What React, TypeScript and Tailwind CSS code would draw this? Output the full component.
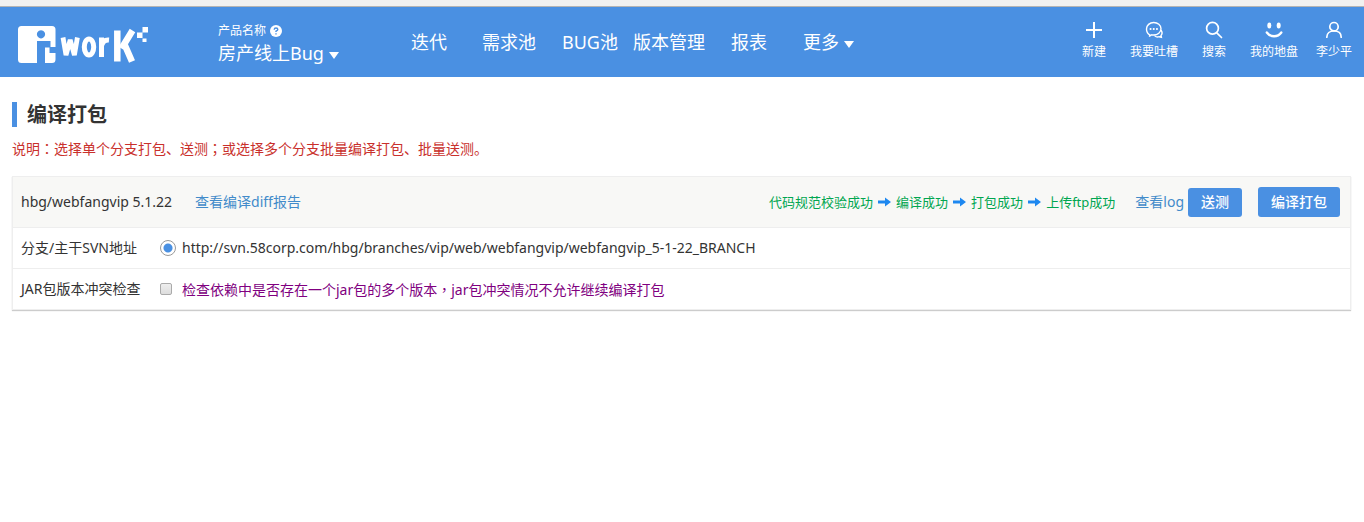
import React from "react";

const nav = [
  { label: "迭代", cls: "w-[36px]" },
  { label: "需求池", cls: "ml-[35px] w-[54px]" },
  { label: "BUG池", cls: "ml-[26px] w-[57px]" },
  { label: "版本管理", cls: "ml-[14px] w-[72px]" },
  { label: "报表", cls: "ml-[26px] w-[36px]" },
];

const stroke = { fill: "none", stroke: "currentColor", strokeWidth: 1.5, strokeLinecap: "round" as const };

const tools = [
  {
    label: "新建",
    cls: "",
    icon: <path d="M9 1v16M1 9h16" fill="none" stroke="currentColor" strokeWidth="2" />,
  },
  {
    label: "我要吐槽",
    cls: "ml-6",
    icon: (
      <g {...stroke} strokeWidth={1.4}>
        <path d="M5 14.200C2.800 13 1.500 11 1.500 8C1.500 4.300 4.700 1.500 8.700 1.500S16 4.300 16 7.800S12.700 14 8.700 14C7.800 14 7.200 14 6.500 13.800L4.300 15.500z" />
        <path d="M16.200 9.500c1.200 1.800 1 3.700-.2 5l.4 1.800-2.200-.6c-1.800.7-3.300.3-4.300-.8" />
        <path d="M5.500 8h.1M8.700 8h.1M11.900 8h.1" strokeWidth="2" />
      </g>
    ),
  },
  {
    label: "搜索",
    cls: "ml-6",
    icon: (
      <g {...stroke} strokeWidth={1.7}>
        <circle cx="7.500" cy="7.300" r="5.900" />
        <path d="M11.800 11.800l4.700 4.700" />
      </g>
    ),
  },
  {
    label: "我的地盘",
    cls: "ml-6",
    icon: (
      <g>
        <ellipse cx="4.300" cy="4.500" rx="2" ry="2.900" fill="currentColor" />
        <ellipse cx="13.700" cy="4.500" rx="2" ry="2.900" fill="currentColor" />
        <path d="M1.800 11.500c3.500 5 11 5 14.500 0" fill="none" stroke="currentColor" strokeWidth="2.400" strokeLinecap="round" />
      </g>
    ),
  },
  {
    label: "李少平",
    cls: "ml-[18px]",
    icon: (
      <g {...stroke} strokeWidth={1.7}>
        <circle cx="9" cy="5.700" r="4.200" />
        <path d="M1.800 16.200c0-4 3-6.200 7.200-6.200s7.200 2.200 7.200 6.200" />
      </g>
    ),
  },
];

function Logo() {
  return (
    <svg width="132" height="38" viewBox="0 0 132 38" role="img" aria-label="iwork">
      <path
        fillRule="evenodd"
        fill="#fff"
        d="M3.500 0H34Q37.500 0 37.500 3.500V21H32.500V15H19V37H3.500Q0 37 0 33.500V3.500Q0 0 3.500 0zM23 4.200a4.100 4.100 0 1 0 .01 0z"
      />
      <path d="M27 21.500h4.500V27h6v6.500q0 3.500-3.500 3.500h-7z" fill="#fff" />
      <g fill="none" stroke="#fff">
        <path d="M45 11.500l3 17.500 4.200-15 4.200 15 3-17.500" strokeWidth="4.800" strokeLinejoin="bevel" />
        <ellipse cx="71" cy="21" rx="4.700" ry="8" strokeWidth="5" />
        <path d="M83.500 31V11.500M84 19q1-5.500 7-5" strokeWidth="5" />
        <path d="M99.300 4.500v31" strokeWidth="6.500" />
        <path d="M114.500 4.500l-11 18M105.500 16l8.500 19.500" strokeWidth="6.500" />
      </g>
      <path d="M124.500 1h5.500v5.500h-5.500zM119 6.500h5.500V12H119zM124.500 12.500h4v3.500h-4z" fill="#fff" />
    </svg>
  );
}

function Caret() {
  return (
    <svg width="10" height="7" viewBox="0 0 10 7" className="mt-1" aria-hidden="true">
      <path d="M0 0h10L5 7z" fill="currentColor" />
    </svg>
  );
}

function Arrow() {
  return (
    <svg width="13" height="10" viewBox="0 0 13 10" className="mx-[5px]" aria-hidden="true">
      <path d="M0 3.500h7V.5L13 5 7 9.500v-3H0z" fill="#1e88f0" />
    </svg>
  );
}

const steps = ["代码规范校验成功", "编译成功", "打包成功", "上传ftp成功"];

export default function App() {
  return (
    <div className="min-h-screen bg-white font-['Noto_Sans','Noto_Sans_CJK_SC',sans-serif] text-sm text-[#333]">
      <div className="h-[7px] border-b border-[#b4b4b4] bg-[#f1f1f1]" />
      <header className="flex h-[70px] items-center bg-[#4a90e2] whitespace-nowrap text-white">
        <a href="#home" className="ml-[18px] w-[200px] pt-1.5">
          <Logo />
        </a>
        <div className="w-[193px] pt-1.5">
          <div className="flex h-4 items-center gap-1 text-xs">
            产品名称
            <svg width="12" height="12" viewBox="0 0 12 12" aria-hidden="true">
              <circle cx="6" cy="6" r="6" fill="#fff" />
              <path d="M4.200 4.700q0-1.700 1.800-1.700t1.800 1.500Q7.800 5.400 6 6.200V7M6 8.200v1.300" fill="none" stroke="#4a90e2" strokeWidth="1.400" />
            </svg>
          </div>
          <button className="flex h-7 items-center gap-[5px] text-lg">
            房产线上Bug <Caret />
          </button>
        </div>
        <nav className="flex items-center text-lg">
          {nav.map((n) => (
            <a key={n.label} href="#nav" className={n.cls}>
              {n.label}
            </a>
          ))}
          <button className="ml-9 flex items-center gap-[5px]">
            更多 <Caret />
          </button>
        </nav>
        <div className="mr-3 mb-1 ml-auto flex text-xs">
          {tools.map((t) => (
            <a key={t.label} href="#tool" className={"flex flex-col items-center gap-[5px] " + t.cls}>
              <svg width="18" height="18" viewBox="0 0 18 18" aria-hidden="true">
                {t.icon}
              </svg>
              <span className="leading-4">{t.label}</span>
            </a>
          ))}
        </div>
      </header>

      <main className="px-3 pt-[25px]">
        <h1 className="border-l-[5px] border-[#4a90e2] pl-[10px] text-xl leading-[25px] font-bold">编译打包</h1>
        <p className="mt-[11px] leading-5 text-[#c9302c]">
          说明<span className="font-['Noto_Sans_CJK_JP',sans-serif]">：</span>选择单个分支打包、送测
          <span className="font-['Noto_Sans_CJK_JP',sans-serif]">；</span>或选择多个分支批量编译打包、批量送测。
        </p>

        <section className="mt-[17px] mr-px border border-[#eee] shadow-[0_1px_1px_rgba(0,0,0,0.2)]">
          <div className="flex h-[50px] items-center bg-[#f8f8f6] pr-[10px] pl-2">
            <span>hbg/webfangvip 5.1.22</span>
            <a href="#diff" className="ml-[23px] text-[#428bca]">
              查看编译diff报告
            </a>
            <div className="ml-auto flex items-center text-[13px] text-[#00a650]">
              {steps.map((s, i) => (
                <React.Fragment key={s}>
                  {i > 0 && <Arrow />}
                  <span>{s}</span>
                </React.Fragment>
              ))}
            </div>
            <a href="#log" className="ml-5 text-[#428bca]">
              查看log
            </a>
            <button className="ml-1 h-[29px] rounded-[3px] bg-[#4a90e2] px-[13px] font-medium text-white">送测</button>
            <button className="ml-4 h-[30px] rounded-[3px] bg-[#4a90e2] px-[13px] font-medium text-white">编译打包</button>
          </div>
          <div className="flex h-[41px] items-center border-t border-[#eee] pl-2">
            <span className="w-[139px]">分支/主干SVN地址</span>
            <label className="flex items-center gap-[6px]">
              <input
                type="radio"
                name="branch"
                defaultChecked
                className="size-4 appearance-none rounded-full border border-[#999] bg-white bg-[radial-gradient(circle,#4a90e2_0_4px,transparent_5px)]"
              />
              http://svn.58corp.com/hbg/branches/vip/web/webfangvip/webfangvip_5-1-22_BRANCH
            </label>
          </div>
          <div className="flex h-[41px] items-center border-t border-[#eee] pl-2">
            <span className="w-[139px]">JAR包版本冲突检查</span>
            <label className="flex items-center gap-[10px] text-[#800080]">
              <input
                type="checkbox"
                className="size-3 appearance-none rounded-[2px] border border-[#aaa] bg-linear-to-b from-[#eee] to-[#ddd]"
              />
              <span>
                检查依赖中是否存在一个jar包的多个版本<span className="font-['Noto_Sans_CJK_TC',sans-serif]">，</span>jar包冲突情况不允许继续编译打包
              </span>
            </label>
          </div>
        </section>
      </main>
    </div>
  );
}
